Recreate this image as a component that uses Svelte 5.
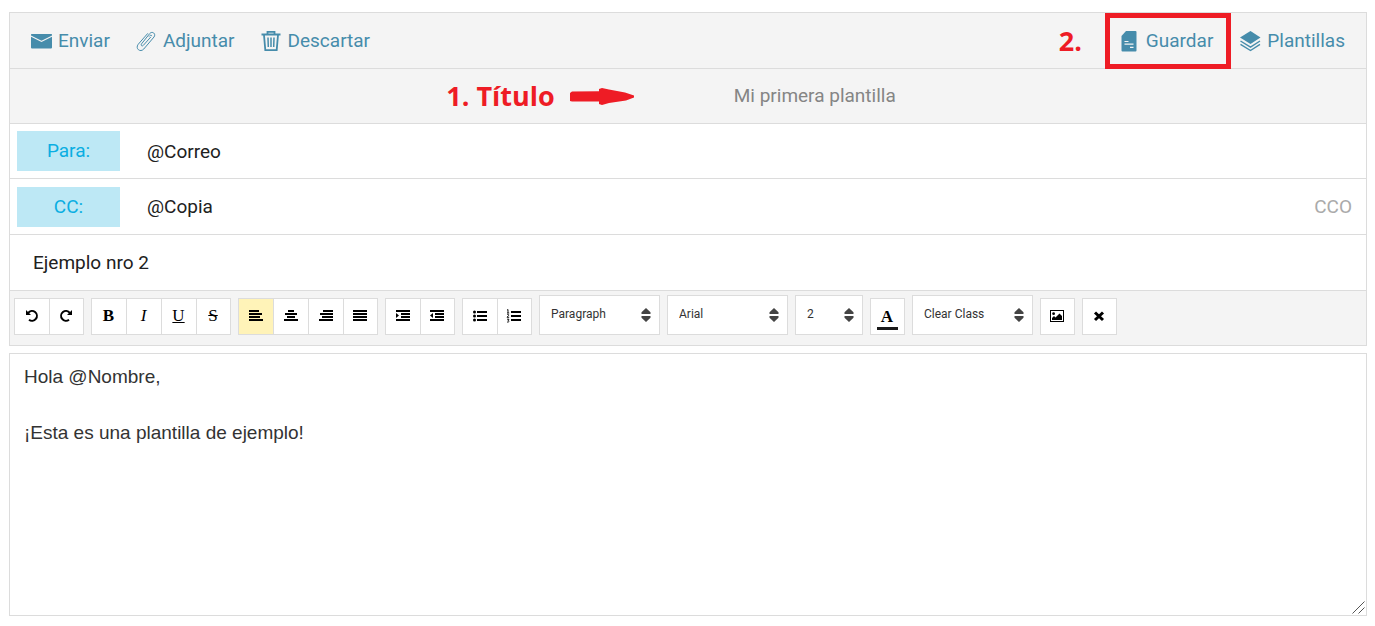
<script>
  let title = $state('Mi primera plantilla');
  let to = $state('@Correo');
  let cc = $state('@Copia');
  let subject = $state('Ejemplo nro 2');
  let body = $state('Hola @Nombre,\n\n¡Esta es una plantilla de ejemplo!');

  const bars = {
    left: [[1, 10], [1, 13], [1, 11], [1, 14]],
    center: [[5, 6], [2, 12], [4, 8], [1, 14]],
    right: [[5, 10], [2, 13], [4, 11], [1, 14]],
    justify: [[1, 14], [1, 14], [1, 14], [1, 14]],
    indent: [[1, 14], [6, 9], [6, 9], [1, 14]],
    outdent: [[1, 14], [6, 9], [6, 9], [1, 14]]
  };

  const groups = [
    [['undo', 'Deshacer'], ['redo', 'Rehacer']],
    [['bold', 'Negrita'], ['italic', 'Cursiva'], ['underline', 'Subrayado'], ['strike', 'Tachado']],
    [['left', 'Alinear a la izquierda'], ['center', 'Centrar'], ['right', 'Alinear a la derecha'], ['justify', 'Justificar']],
    [['indent', 'Aumentar sangría'], ['outdent', 'Reducir sangría']],
    [['bullets', 'Viñetas'], ['numbers', 'Numeración']]
  ];
  const letters = { bold: 'B', italic: 'I', underline: 'U', strike: 'S' };
</script>

{#snippet icon(name)}
  <svg class="glyph" viewBox="0 0 16 16" width="16" height="16" aria-hidden="true">
    {#if name === 'undo' || name === 'redo'}
      <g transform={name === 'redo' ? 'translate(16 0) scale(-1 1)' : undefined}>
        <path d="M4.200 4.800A4.900 4.900 0 1 1 5 11.800" fill="none" stroke="#000" stroke-width="2" />
        <path d="M2 2v5h5z" />
      </g>
    {:else if bars[name]}
      {#each bars[name] as [x, w], i}
        <rect {x} y={2 + i * 3} width={w} height="2" />
      {/each}
      {#if name === 'indent'}<path d="M1 5v5l3-2.500z" />{/if}
      {#if name === 'outdent'}<path d="M4 5v5l-3-2.500z" />{/if}
    {:else if name === 'bullets'}
      {#each [4, 8, 12] as y}
        <circle cx="2.500" cy={y} r="1.500" />
        <rect x="5" y={y - 1} width="10" height="2" />
      {/each}
    {:else if name === 'numbers'}
      {#each [4, 8, 12] as y}
        <rect x="5" y={y - 1} width="10" height="2" />
      {/each}
      <path d="M1 2.200l1-.7v3.500M1 5h2.200M1 6.800c1-1 2-.3 1.700.5L1 9.300h2.200M1 11.200h2l-1 1.200c1.600.1 1.300 2.100-1 1.600" fill="none" stroke="#000" stroke-width=".9" />
    {:else if name === 'image'}
      <rect x="1.500" y="2.500" width="13" height="11" fill="none" stroke="#000" />
      <circle cx="4.600" cy="5.700" r="1.400" />
      <path d="M3 12v-2l2-2 1.500 1.500L10.500 5.500 13 8v4z" />
    {:else if name === 'clear'}
      <path d="M4 4.500l8 7.500M12 4.500L4 12" stroke="#000" stroke-width="3" />
    {/if}
  </svg>
{/snippet}

{#snippet picker(label, size, option)}
  <span class="picker {size}">
    <select aria-label={label}><option>{option}</option></select>
    <svg viewBox="0 0 10 14" width="10" height="14" aria-hidden="true">
      <path d="M5 0L9.500 4.200V6h-9V4.200zM.5 8h9v1.800L5 14 .5 9.800z" />
    </svg>
  </span>
{/snippet}

<main>
  <section class="card">
    <header class="actions">
      <button class="action send">
        <svg viewBox="0 0 22 22" width="22" height="22" aria-hidden="true">
          <path d="M1 4.500Q1 4 1.500 4h20q.5 0 .5.500v1L11.500 10.800 1 5.500z" />
          <path d="M1 6.800l10.500 5.200L22 6.800V17.500q0 1-1 1H2q-1 0-1-1z" />
        </svg>
        Enviar
      </button>
      <button class="action attach">
        <svg viewBox="0 0 22 22" width="22" height="22" aria-hidden="true">
          <path d="M15.600 7.200L8.300 15.400c-1.200 1.300-2.900-.2-1.800-1.500L14.700 3.600c2.500-3 6.700.2 4.300 3.400L8.800 19c-3.500 3.900-8.900-.4-5.600-4.700L12.600 3.600M16.800 5.700c-.8-1-1.800-.4-2.600.6" fill="none" stroke="currentColor" stroke-width="1" stroke-linecap="round" />
        </svg>
        Adjuntar
      </button>
      <button class="action discard">
        <svg viewBox="0 0 22 22" width="22" height="22" aria-hidden="true">
          <path d="M1.500 4.500h19M7.500 4.500V1.800h7v2.700M4 5l1.300 15.200h11.400L18 5" fill="none" stroke="currentColor" stroke-width="1.800" />
          <path d="M8 7.500l.3 9.500M11 7.500v9.500M14 7.500l-.3 9.500" fill="none" stroke="currentColor" stroke-width="1.500" />
        </svg>
        Descartar
      </button>
      <span class="note step">2.</span>
      <button class="action save">
        <svg viewBox="0 0 18 22" width="18" height="22" aria-hidden="true">
          <path d="M6 1h9.500q1 0 1 1v18.500q0 1-1 1H2.500q-1 0-1-1V6z" />
          <path d="M4.500 11.500h4M4.500 14.200h9M10 17.300h3.500" stroke="#f4f4f4" stroke-width="1.200" />
        </svg>
        Guardar
      </button>
      <button class="action templates">
        <svg viewBox="0 0 22 22" width="22" height="22" aria-hidden="true">
          <path d="M11.500 1L21.500 7.500 11.500 14 1 7.500z" />
          <path d="M1.500 11l10 6.200 9.500-6.200M1.500 14.300l10 6.200 9.500-6.200" fill="none" stroke="currentColor" stroke-width="1.400" />
        </svg>
        Plantillas
      </button>
    </header>

    <div class="title-row">
      <div class="hint">
        <label class="note" for="title">1. Título</label>
        <svg viewBox="0 0 64 17" width="64" height="17" aria-hidden="true">
          <path d="M0 5l2-1.500 27-.2V1l3-1 7 1.500L55 4.500l9 3v2l-8 3-17 2.500-7 2-3-1v-2.500H2L0 13z" />
        </svg>
      </div>
      <input id="title" bind:value={title} />
    </div>

    <div class="field">
      <label for="to">Para:</label>
      <input id="to" bind:value={to} />
    </div>
    <div class="field">
      <label for="cc">CC:</label>
      <input id="cc" bind:value={cc} />
      <button class="cco">CCO</button>
    </div>
    <div class="subject">
      <input aria-label="Asunto" bind:value={subject} />
    </div>

    <div class="toolbar">
      {#each groups as group}
        <div class="group">
          {#each group as [name, label]}
            <button class="tool" class:active={name === 'left'} aria-label={label}>
              {#if letters[name]}
                <span class="letter {name}">{letters[name]}</span>
              {:else}
                {@render icon(name)}
              {/if}
            </button>
          {/each}
        </div>
      {/each}
      {@render picker('Formato', 'wide', 'Paragraph')}
      {@render picker('Fuente', 'wide', 'Arial')}
      {@render picker('Tamaño', 'narrow', '2')}
      <div class="group"><button class="tool" aria-label="Color de texto"><span class="letter color">A</span></button></div>
      {@render picker('Clase', 'wide', 'Clear Class')}
      <div class="group"><button class="tool" aria-label="Imagen">{@render icon('image')}</button></div>
      <div class="group"><button class="tool" aria-label="Quitar formato">{@render icon('clear')}</button></div>
    </div>
  </section>

  <div class="message">
    <textarea aria-label="Mensaje" rows="9" bind:value={body}></textarea>
    <svg class="grip" viewBox="0 0 13 13" width="13" height="13" aria-hidden="true">
      <path d="M.5 12.500l12-12M6.500 12.500l6-6" stroke="#555" />
    </svg>
  </div>
</main>

<style>
  :global(body) {
    background: #fff;
  }
  main {
    padding: 12px 8px 10px 9px;
    font-family: Roboto, sans-serif;
    font-size: 19px;
    color: #212121;
  }
  main * {
    box-sizing: border-box;
  }
  button,
  input,
  select,
  textarea {
    margin: 0;
    padding: 0;
    border: 0;
    border-radius: 0;
    background: none;
    color: inherit;
    font: inherit;
  }
  input {
    min-width: 0;
    height: 40px;
  }
  svg {
    display: block;
    flex: none;
    fill: currentColor;
  }
  .card {
    border: 1px solid #dcdcdc;
  }
  .actions,
  .title-row,
  .field,
  .subject {
    min-height: 56px;
    border-bottom: 1px solid #dcdcdc;
  }
  .title-row,
  .field:nth-of-type(2) {
    min-height: 55px;
  }
  .actions {
    display: flex;
    align-items: center;
    gap: 26px;
    padding: 0 21px 0 20px;
    background: #f4f4f4;
  }
  .action {
    display: flex;
    align-items: center;
    gap: 6px;
    height: 100%;
    color: #468cab;
  }
  .attach,
  .discard {
    margin-left: -1px;
  }
  .note {
    color: #ee1c25;
    font-family: 'Open Sans', sans-serif;
    font-weight: bold;
    font-size: 27px;
    line-height: 32px;
  }
  .step {
    margin-left: auto;
  }
  .save {
    position: relative;
    gap: 8px;
    margin-left: 12px;
  }
  .save::after {
    content: '';
    position: absolute;
    inset: -16px -18px -17px -15px;
    border: 5px solid #ee1c25;
  }
  .title-row {
    display: grid;
    grid-template-columns: 46% 362px 1fr;
    align-items: center;
    background: #f4f4f4;
  }
  .hint {
    display: flex;
    align-items: center;
    justify-content: flex-end;
    gap: 15px;
    color: #ee1c25;
  }
  .title-row input {
    padding-bottom: 2px;
    color: #858585;
    text-align: center;
  }
  .field {
    display: flex;
    align-items: center;
    padding: 0 14px 0 7px;
  }
  .field label {
    width: 103px;
    margin-right: 27px;
    background: #bde8f5;
    color: #0aaee2;
    line-height: 40px;
    text-align: center;
  }
  .field input {
    flex: 1;
  }
  .cco {
    color: #aaa;
  }
  .subject {
    display: flex;
    align-items: center;
    padding: 0 23px;
  }
  .subject input {
    flex: 1;
  }
  .toolbar {
    display: flex;
    flex-wrap: wrap;
    align-items: flex-end;
    gap: 7px;
    padding: 4px 4px 10px;
    background: #f4f4f4;
  }
  .group {
    display: flex;
    border-right: 1px solid #dcdcdc;
  }
  .tool {
    display: flex;
    align-items: center;
    justify-content: center;
    width: 35px;
    height: 37px;
    padding: 0 1px 1px 0;
    border: 1px solid #dcdcdc;
    border-right: 0;
    background: #fff;
    color: #000;
  }
  .tool:last-child {
    width: 34px;
  }
  .active {
    background: #fff3b8;
  }
  .letter {
    font-family: 'Liberation Serif', serif;
    font-size: 17px;
    line-height: 20px;
  }
  .bold,
  .color {
    font-weight: bold;
  }
  .italic {
    font-style: italic;
  }
  .underline {
    text-decoration: underline;
  }
  .strike {
    text-decoration: line-through;
  }
  .color {
    width: 21px;
    margin-top: 4px;
    border-bottom: 3px solid #1a1a1a;
  }
  .picker {
    position: relative;
    height: 40px;
    border: 1px solid #dcdcdc;
    background: #fff;
    color: #444;
  }
  .wide {
    width: 121px;
  }
  .narrow {
    width: 68px;
  }
  .picker select {
    width: 100%;
    height: 36px;
    padding-left: 11px;
    appearance: none;
    color: #333;
    font-size: 12px;
  }
  .picker svg {
    position: absolute;
    right: 8px;
    top: 12px;
    pointer-events: none;
  }
  .message {
    position: relative;
    margin-top: 7px;
  }
  .grip {
    position: absolute;
    right: 2px;
    bottom: 2px;
    pointer-events: none;
  }
  textarea {
    display: block;
    width: 100%;
    padding: 9px 14px 0;
    border: 1px solid #dcdcdc;
    color: #333;
    font-family: 'Liberation Sans', Arial, sans-serif;
    font-size: 19px;
    line-height: 28px;
    resize: none;
  }
</style>
